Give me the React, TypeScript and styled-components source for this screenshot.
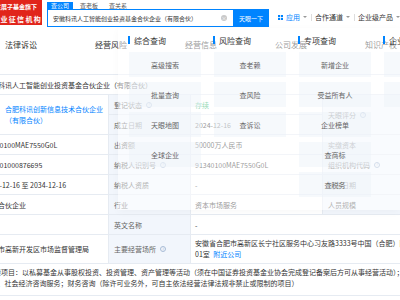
import React from "react";
import styled, { createGlobalStyle } from "styled-components";

const BLUE = "#0084ff";
const BORDER = "#e6ebf2";
const LABEL_BG = "#f2f6fc";

const GlobalStyle = createGlobalStyle`
  html, body { margin: 0; padding: 0; background: #fff; }
  body {
    font-family: "Noto Sans CJK SC", "Noto Sans", "DejaVu Sans", sans-serif;
    color: #333;
  }
  * { box-sizing: border-box; }
`;

const Page = styled.div`
  position: relative;
  width: 400px;
  height: 300px;
  overflow: hidden;
  background: #fff;
`;

/* ---------- header ---------- */
const Header = styled.header`
  display: flex;
  align-items: flex-start;
  height: 28px;
`;

const Logo = styled.div`
  flex-shrink: 0;
  width: 42px;
  height: 25px;
  background: #e1251b;
  color: #fff;
  display: flex;
  flex-direction: column;
  align-items: flex-end;
  padding-top: 3px;
  overflow: hidden;
  font-weight: 700;
`;

const LogoLine = styled.div<{ $size: number; $spacing: number; $right: number; $gap?: number }>`
  white-space: nowrap;
  font-size: ${(p) => p.$size}px;
  line-height: ${(p) => p.$size + 2}px;
  letter-spacing: ${(p) => p.$spacing}px;
  margin-right: ${(p) => p.$right}px;
  margin-top: ${(p) => p.$gap ?? 0}px;
`;

const SearchArea = styled.div`
  margin-left: 5px;
  display: flex;
  flex-direction: column;
`;

const SearchTabs = styled.div`
  display: flex;
  gap: 3px;
  height: 7px;
  margin-top: 2px;
`;

const SearchTab = styled.div<{ $active?: boolean }>`
  font-size: 6px;
  line-height: 7px;
  padding: 0 4px;
  background: ${(p) => (p.$active ? BLUE : "transparent")};
  color: ${(p) => (p.$active ? "#fff" : "#555")};
`;

const SearchRow = styled.div`
  display: flex;
  height: 18px;
`;

const SearchBox = styled.div`
  width: 186px;
  border: 1px solid ${BLUE};
  border-right: 0;
  display: flex;
  align-items: center;
  padding: 0 6px 0 5px;
  font-size: 6px;
  color: #333;
  white-space: nowrap;
`;

const ClearIcon = styled.span`
  margin-left: auto;
  width: 6px;
  height: 6px;
  border-radius: 50%;
  background: #c9c9c9;
  color: #fff;
  font-size: 5px;
  line-height: 6px;
  text-align: center;
`;

const SearchButton = styled.div`
  width: 36px;
  background: ${BLUE};
  color: #fff;
  font-size: 6px;
  display: flex;
  align-items: center;
  justify-content: center;
`;

const Nav = styled.nav`
  display: flex;
  align-items: center;
  height: 12px;
  margin-top: 11px;
  margin-left: 9px;
  white-space: nowrap;
`;

const NavItem = styled.div<{ $color: string }>`
  display: flex;
  align-items: center;
  font-size: 7px;
  color: ${(p) => p.$color};
`;

const Caret = styled.span`
  margin-left: 3px;
  width: 0;
  height: 0;
  border-left: 2px solid transparent;
  border-right: 2px solid transparent;
  border-top: 2.5px solid #999;
`;

const NavSep = styled.span`
  width: 1px;
  height: 7px;
  background: #ddd;
  margin: 0 3px 0 4px;
`;

/* ---------- tabs ---------- */
const TabsBar = styled.div`
  display: flex;
  padding-top: 12px;
  height: 22px;
`;

const Tab = styled.div`
  width: 90px;
  flex-shrink: 0;
  padding-left: 5px;
  font-size: 8px;
  line-height: 10px;
  color: #333;
  white-space: nowrap;
`;

/* ---------- table ---------- */
const Table = styled.div`
  margin-top: 24px;
  margin-left: -90px;
  width: 602px;
  display: grid;
  grid-template-columns: 68px 130px 82px 132px 90px 100px;
  grid-template-rows: repeat(8, 20px) 29px 32px;
  border-top: 1px solid ${BORDER};
  font-size: 7px;
`;

const Cell = styled.div<{ $label?: boolean; $pad?: number; $span?: number; $rows?: number; $top?: boolean }>`
  display: flex;
  align-items: ${(p) => (p.$top ? "flex-start" : "center")};
  padding-left: ${(p) => p.$pad ?? 5}px;
  padding-top: ${(p) => (p.$top ? 3 : 0)}px;
  background: ${(p) => (p.$label ? LABEL_BG : "#fff")};
  color: ${(p) => (p.$label ? "#666" : "#333")};
  border-bottom: 1px solid ${BORDER};
  border-left: 1px solid ${BORDER};
  white-space: nowrap;
  overflow: hidden;
  grid-column: ${(p) => (p.$span ? `span ${p.$span}` : "auto")};
  grid-row: ${(p) => (p.$rows ? `span ${p.$rows}` : "auto")};
`;

const Help = styled.span`
  display: inline-flex;
  align-items: center;
  justify-content: center;
  width: 6px;
  height: 6px;
  margin-left: 4px;
  border-radius: 50%;
  border: 0.7px solid #a9bcd6;
  color: #a9bcd6;
  font-size: 4.5px;
  line-height: 1;
`;

const Green = styled.span`
  color: #1fb36b;
`;

const Link = styled.span`
  color: ${BLUE};
`;

const NearLink = styled(Link)`
  margin-left: 2px;
`;

const PartnerLogo = styled.span`
  width: 16px;
  height: 16px;
  margin-right: 5px;
  flex-shrink: 0;
  background: #e9f1fb;
  border-radius: 2px;
`;

const Lines = styled.div`
  display: flex;
  flex-direction: column;
  line-height: 11px;
`;

/* ---------- dropdown ---------- */
const Dropdown = styled.div`
  position: absolute;
  left: 118px;
  top: 28px;
  width: 282px;
  height: 182px;
  padding: 6px 0 0 10px;
  background: rgba(255, 255, 255, 0.5);
  box-shadow: 0 2px 8px rgba(0, 0, 0, 0.03);
  display: grid;
  grid-template-columns: repeat(4, 72px);
  column-gap: 13px;
  align-content: start;
  align-items: start;
`;

const MenuColumn = styled.div`
  display: flex;
  flex-direction: column;
`;

const MenuTitle = styled.div`
  display: flex;
  align-items: center;
  height: 12px;
  margin-bottom: 6px;
  font-size: 8px;
  color: #333;
  white-space: nowrap;
  &::before {
    content: "";
    width: 1.5px;
    height: 8px;
    background: ${BLUE};
    margin-right: 4.5px;
  }
`;

const MenuCard = styled.div`
  height: 25px;
  margin: 0 0 5px 1px;
  width: 72px;
  background: rgba(236, 241, 248, 0.45);
  display: flex;
  align-items: center;
  justify-content: center;
  font-size: 7px;
  color: #666;
  white-space: nowrap;
`;

const GridIcon = () => (
  <svg width="5" height="5" viewBox="0 0 10 10" style={{ marginRight: 3 }}>
    <rect x="0" y="0" width="4.2" height="4.2" fill={BLUE} />
    <rect x="5.8" y="0" width="4.2" height="4.2" fill={BLUE} />
    <rect x="0" y="5.8" width="4.2" height="4.2" fill={BLUE} />
    <rect x="5.8" y="5.8" width="4.2" height="4.2" fill={BLUE} />
  </svg>
);

const menu: { title: string; items: string[] }[] = [
  { title: "综合查询", items: ["高级搜索", "批量查询", "天眼地图", "全球企业"] },
  { title: "风险查询", items: ["查老赖", "查风险", "查诉讼"] },
  { title: "专项查询", items: ["新增企业", "受益所有人", "企业榜单", "查商标", "查税务"] },
  { title: "企业服务", items: ["企业认证", "数据服务"] },
];

export default function App() {
  return (
    <Page>
      <GlobalStyle />
      <Header>
        <Logo>
          <LogoLine $size={6} $spacing={0} $right={5}>
            国家中小企业发展子基金旗下
          </LogoLine>
          <LogoLine $size={7} $spacing={1.3} $right={0} $gap={3.5}>
            官方备案企业征信机构
          </LogoLine>
        </Logo>
        <SearchArea>
          <SearchTabs>
            <SearchTab $active>查公司</SearchTab>
            <SearchTab>查老板</SearchTab>
            <SearchTab>查关系</SearchTab>
          </SearchTabs>
          <SearchRow>
            <SearchBox>
              安徽科讯人工智能创业投资基金合伙企业（有限合伙）
              <ClearIcon>×</ClearIcon>
            </SearchBox>
            <SearchButton>天眼一下</SearchButton>
          </SearchRow>
        </SearchArea>
        <Nav>
          <NavItem $color={BLUE}>
            <GridIcon />
            应用
            <Caret />
          </NavItem>
          <NavSep />
          <NavItem $color="#333">
            合作通道
            <Caret />
          </NavItem>
          <NavSep />
          <NavItem $color="#333">
            企业级产品
            <Caret />
          </NavItem>
        </Nav>
      </Header>

      <TabsBar>
        <Tab>法律诉讼</Tab>
        <Tab>经营风险</Tab>
        <Tab>经营信息</Tab>
        <Tab>公司发展</Tab>
        <Tab>知识产权</Tab>
      </TabsBar>

      <Table>
        <Cell $label>企业名称</Cell>
        <Cell $span={5}>安徽科讯人工智能创业投资基金合伙企业（有限合伙）</Cell>

        <Cell $label $rows={2}>执行事务合伙人</Cell>
        <Cell $rows={2}>
          <PartnerLogo />
          <Lines>
            <Link>合肥科讯创新信息技术合伙企业</Link>
            <Link>（有限合伙）</Link>
          </Lines>
        </Cell>
        <Cell $label>
          登记状态<Help>?</Help>
        </Cell>
        <Cell $pad={4}>
          <Green>存续</Green>
        </Cell>
        <Cell $label $rows={2}>
          天眼评分<Help>?</Help>
        </Cell>
        <Cell $rows={2}>86分</Cell>
        <Cell $label>成立日期</Cell>
        <Cell $pad={4}>2024-12-16</Cell>

        <Cell $label>统一社会信用代码</Cell>
        <Cell>91340100MAE7550G0L</Cell>
        <Cell $label>出资额</Cell>
        <Cell $pad={4}>50000万人民币</Cell>
        <Cell $label>实缴资本</Cell>
        <Cell>-</Cell>

        <Cell $label>工商注册号</Cell>
        <Cell>340101000876695</Cell>
        <Cell $label>
          纳税人识别号<Help>?</Help>
        </Cell>
        <Cell $pad={4}>91340100MAE7550G0L</Cell>
        <Cell $label>
          组织机构代码<Help>?</Help>
        </Cell>
        <Cell>MAE7550G0</Cell>

        <Cell $label>营业期限</Cell>
        <Cell>2024-12-16 至 2034-12-16</Cell>
        <Cell $label>纳税人资质</Cell>
        <Cell $pad={4}>-</Cell>
        <Cell $label>核准日期</Cell>
        <Cell>2024-12-16</Cell>

        <Cell $label>企业类型</Cell>
        <Cell>有限合伙企业</Cell>
        <Cell $label>行业</Cell>
        <Cell $pad={4}>资本市场服务</Cell>
        <Cell $label>人员规模</Cell>
        <Cell>-</Cell>

        <Cell $label>参保人数</Cell>
        <Cell>-</Cell>
        <Cell $label>英文名称</Cell>
        <Cell $pad={4} $span={3}>-</Cell>

        <Cell $label>登记机关</Cell>
        <Cell>合肥市高新开发区市场监督管理局</Cell>
        <Cell $label>
          主要经营场所<Help>?</Help>
        </Cell>
        <Cell $pad={4} $span={3}>
          <Lines>
            <span>安徽省合肥市高新区长宁社区服务中心习友路3333号中国（合肥）国际智能语音产业园12</span>
            <span>
              01室 <NearLink>附近公司</NearLink>
            </span>
          </Lines>
        </Cell>

        <Cell $label>经营范围</Cell>
        <Cell $span={5} $pad={8} $top>
          <Lines>
            <span>
              一般项目：以私募基金从事股权投资、投资管理、资产管理等活动（须在中国证券投资基金业协会完成登记备案后方可从事经营活动）；企业管理咨询；信息咨询服务（不含许可类信息咨询服
            </span>
            <span>务）、社会经济咨询服务；财务咨询（除许可业务外，可自主依法经营法律法规非禁止或限制的项目）</span>
          </Lines>
        </Cell>
      </Table>

      <Dropdown>
        {menu.map((col) => (
          <MenuColumn key={col.title}>
            <MenuTitle>{col.title}</MenuTitle>
            {col.items.map((it) => (
              <MenuCard key={it}>{it}</MenuCard>
            ))}
          </MenuColumn>
        ))}
      </Dropdown>
    </Page>
  );
}
